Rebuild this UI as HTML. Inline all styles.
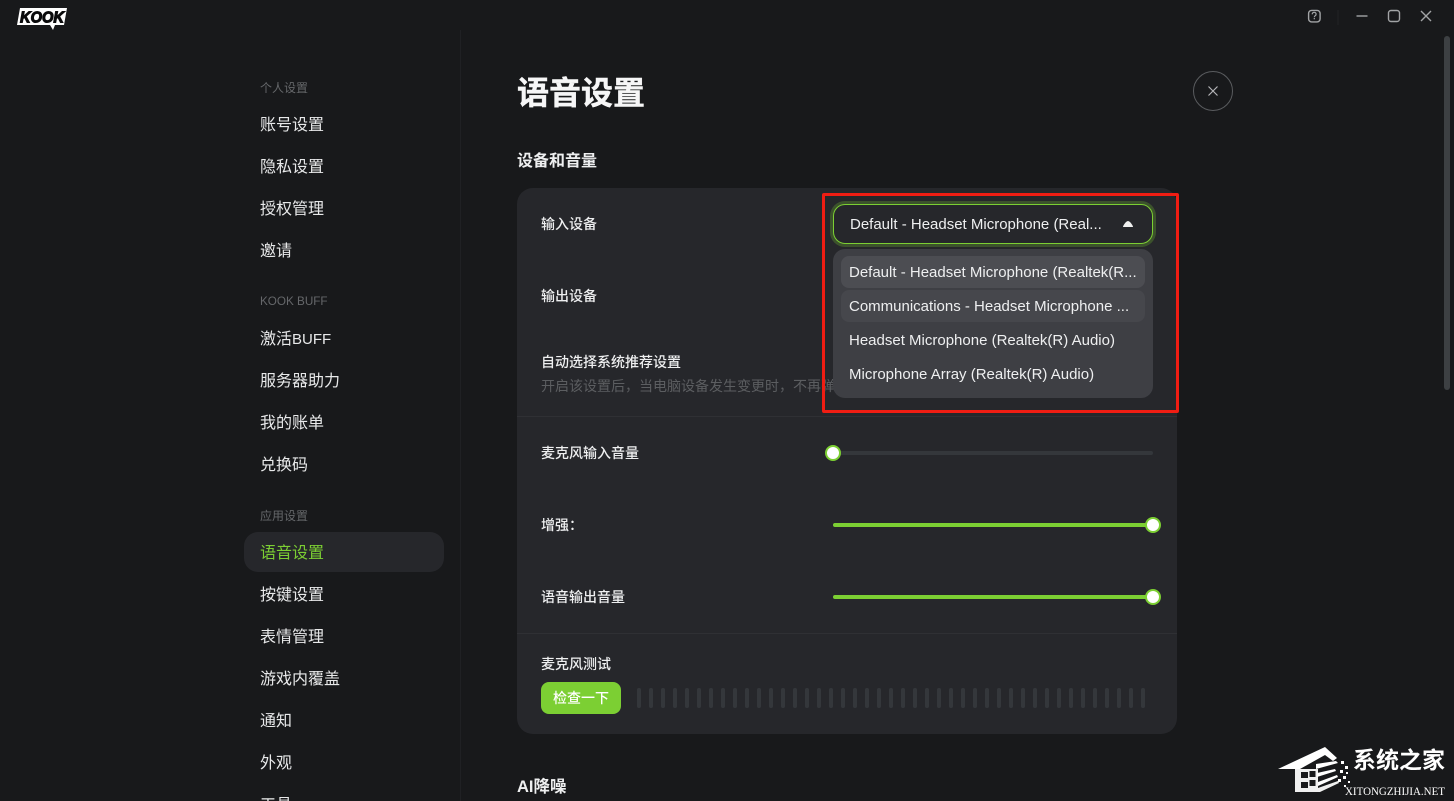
<!DOCTYPE html>
<html lang="zh">
<head>
<meta charset="utf-8">
<title>语音设置</title>
<style>
html,body{margin:0;padding:0;background:#18191b;}
#app{position:relative;width:1454px;height:801px;overflow:hidden;background:#18191b;font-family:"Liberation Sans","Noto Sans CJK SC",sans-serif;color:#e6e7e8;}
.t{position:absolute;white-space:nowrap;line-height:20px;}
.nav{left:260px;font-size:16px;color:#e8e9ea;margin-top:-8px;}
.hdr{left:260px;font-size:12px;color:#65676a;margin-top:-10px;}
.lab{left:541px;font-size:14px;font-weight:500;color:#eeeff0;margin-top:-10px;}
.box{position:absolute;box-sizing:border-box;}
.opt{position:absolute;left:849px;font-size:15px;color:#eeeff0;line-height:20px;white-space:nowrap;margin-top:-9px;}
.thumb{position:absolute;box-sizing:border-box;width:16px;height:16px;border-radius:50%;background:#fff;border:2px solid #7ccf33;}
.track{position:absolute;left:833px;width:320px;height:4px;border-radius:2px;}
</style>
</head>
<body>
<div id="app">

<!-- logo -->
<svg style="position:absolute;left:16px;top:7px" width="54" height="24" viewBox="0 0 54 24">
<path d="M4 1H51L48 18H39L37 23L34 18H1Z" fill="#fff"/>
<text x="4" y="15.500" font-family="Liberation Sans" font-size="16" font-weight="700" font-style="italic" fill="#0b0b0c" stroke="#0b0b0c" stroke-width="1.100" textLength="44" lengthAdjust="spacingAndGlyphs">KOOK</text>
</svg>

<!-- window controls -->
<svg style="position:absolute;left:1300px;top:0" width="140" height="32" viewBox="0 0 140 32" fill="none" stroke="#a2a4a6" stroke-width="1.400">
<rect x="8.600" y="10.400" width="11.500" height="11.500" rx="3"/>
<path d="M12.200 14.300c.2-2.700 4-2.600 3.900-.1 0 1.500-1.800 1.500-1.800 3M14.300 18v1.200" stroke-width="1.200"/>
<path d="M38 10v15" stroke="#222326" stroke-width="1"/>
<path d="M56.500 16H67.500"/>
<rect x="88.500" y="10.500" width="11" height="11" rx="2.500"/>
<path d="M121 11L131 21M131 11L121 21"/>
</svg>

<!-- scrollbar -->
<div class="box" style="left:1444px;top:36px;width:6px;height:354px;border-radius:3px;background:#3d4043"></div>

<!-- sidebar divider -->
<div class="box" style="left:460px;top:30px;width:1px;height:771px;background:#202124"></div>

<!-- sidebar -->
<div class="t hdr" style="top:88px">个人设置</div>
<div class="t nav" style="top:124px">账号设置</div>
<div class="t nav" style="top:166px">隐私设置</div>
<div class="t nav" style="top:208px">授权管理</div>
<div class="t nav" style="top:250px">邀请</div>
<div class="t hdr" style="top:302px;font-size:11.700px">KOOK BUFF</div>
<div class="t nav" style="top:338px">激活<span style="font-size:15px">BUFF</span></div>
<div class="t nav" style="top:380px">服务器助力</div>
<div class="t nav" style="top:422px">我的账单</div>
<div class="t nav" style="top:464px">兑换码</div>
<div class="t hdr" style="top:516px">应用设置</div>
<div class="box" style="left:244px;top:532px;width:200px;height:40px;border-radius:14px;background:#26272b"></div>
<div class="t nav" style="top:552px;color:#7ccf33">语音设置</div>
<div class="t nav" style="top:594px">按键设置</div>
<div class="t nav" style="top:636px">表情管理</div>
<div class="t nav" style="top:678px">游戏内覆盖</div>
<div class="t nav" style="top:720px">通知</div>
<div class="t nav" style="top:762px">外观</div>
<div class="t nav" style="top:804px">工具</div>

<!-- title -->
<div class="t" style="left:517px;top:72px;font-size:32px;font-weight:700;line-height:42px;color:#f6f6f7;-webkit-text-stroke:.4px #f6f6f7">语音设置</div>
<div class="t" style="left:517px;top:152px;font-size:16px;font-weight:700;color:#eeeff0">设备和音量</div>

<!-- close button -->
<div class="box" style="left:1193px;top:71px;width:40px;height:40px;border-radius:50%;border:1px solid #5a5c5f"></div>
<svg style="position:absolute;left:1193px;top:71px" width="40" height="40" fill="none" stroke="#b4b5b7" stroke-width="1.200"><path d="M15.500 15.500L24.500 24.500M24.500 15.500L15.500 24.500"/></svg>

<!-- panel -->
<div class="box" style="left:517px;top:188px;width:660px;height:546px;border-radius:16px;background:#26272b"></div>
<div class="t lab" style="top:224px">输入设备</div>
<div class="t lab" style="top:296px">输出设备</div>
<div class="t lab" style="top:362px">自动选择系统推荐设置</div>
<div class="t lab" style="top:386px;font-size:14px;font-weight:400;color:#5c5e61;width:294px;overflow:hidden">开启该设置后，当电脑设备发生变更时，不再弹</div>
<div class="box" style="left:517px;top:416px;width:660px;height:1px;background:#2f3034"></div>
<div class="t lab" style="top:453px">麦克风输入音量</div>
<div class="t lab" style="top:525px">增强：</div>
<div class="t lab" style="top:597px">语音输出音量</div>
<div class="box" style="left:517px;top:633px;width:660px;height:1px;background:#2f3034"></div>
<div class="t lab" style="top:664px">麦克风测试</div>

<!-- sliders -->
<div class="track" style="top:451px;background:#34373b"></div>
<div class="thumb" style="left:825px;top:445px"></div>
<div class="track" style="top:523px;background:#7ccf33"></div>
<div class="thumb" style="left:1145px;top:517px"></div>
<div class="track" style="top:595px;background:#7ccf33"></div>
<div class="thumb" style="left:1145px;top:589px"></div>

<!-- mic test -->
<div class="box" style="left:541px;top:682px;width:80px;height:32px;border-radius:8px;background:#7ccf33;color:#fff;font-size:14px;font-weight:500;line-height:32px;text-align:center">检查一下</div>
<svg style="position:absolute;left:637px;top:688px" width="508" height="20">
<defs><pattern id="m" width="12" height="20" patternUnits="userSpaceOnUse"><rect width="4" height="20" rx="2" fill="#34373b"/></pattern></defs>
<rect width="508" height="20" fill="url(#m)"/>
</svg>

<div class="t" style="left:517px;top:777px;font-size:16.500px;font-weight:700;color:#eeeff0">AI降噪</div>

<!-- select -->
<div class="box" style="left:833px;top:204px;width:320px;height:40px;border-radius:12px;background:#26272b;border:1.300px solid #7ccf33;box-shadow:0 0 0 3px rgba(124,207,51,.26)"></div>
<div class="opt" style="left:850px;top:224px">Default - Headset Microphone (Real...</div>
<svg style="position:absolute;left:1122px;top:220px" width="12" height="8"><path d="M1 7C1 5.500 4 1 6 1S11 5.500 11 7Z" fill="#f0f0f0"/></svg>

<!-- dropdown -->
<div class="box" style="left:833px;top:249px;width:320px;height:149px;border-radius:12px;background:#3e3f44"></div>
<div class="box" style="left:841px;top:256px;width:304px;height:32px;border-radius:8px;background:#4c4d52"></div>
<div class="box" style="left:841px;top:290px;width:304px;height:32px;border-radius:8px;background:#46474c"></div>
<div class="opt" style="top:272px">Default - Headset Microphone (Realtek(R...</div>
<div class="opt" style="top:306px">Communications - Headset Microphone ...</div>
<div class="opt" style="top:340px">Headset Microphone (Realtek(R) Audio)</div>
<div class="opt" style="top:374px">Microphone Array (Realtek(R) Audio)</div>

<!-- red annotation -->
<div class="box" style="left:822px;top:193px;width:357px;height:220px;border:3px solid #f01d13;border-radius:2px"></div>

<!-- watermark -->
<svg style="position:absolute;left:1270px;top:735px" width="184" height="66" viewBox="0 0 184 66">
<path d="M8 34L55 12L67 23L63 26L55 20L30 34Z" fill="#fff"/>
<path d="M25 34H48V53L68 46L69 48L50 57H25Z" fill="#f0f0f0"/>
<rect x="31" y="37" width="7" height="6" fill="#18191b"/>
<rect x="39.500" y="36" width="6" height="6" fill="#18191b"/>
<rect x="31" y="47" width="7" height="6" fill="#18191b"/>
<rect x="39.500" y="45" width="6" height="6" fill="#18191b"/>
<path d="M46 29L66 26L68 28L46 34ZM47 38L65 34L66 36L47 42ZM48 47L67 40L68 42L48 51Z" fill="#fff"/>
<path d="M71 26h3v3h-3zM75 31h3v3h-3zM70 35h3v3h-3zM73 41h3v3h-3zM68 44h3v3h-3zM76 37h2v2h-2zM78 46h2v2h-2zM74 50h2v2h-2z" fill="#fff"/>
<text x="83" y="33" font-family="Noto Sans CJK SC" font-size="23" font-weight="700" fill="#fff" textLength="92">系统之家</text>
<text x="75" y="60" font-family="Liberation Serif" font-size="12" fill="#fff" textLength="100" lengthAdjust="spacingAndGlyphs">XITONGZHIJIA.NET</text>
</svg>

</div>
</body>
</html>
